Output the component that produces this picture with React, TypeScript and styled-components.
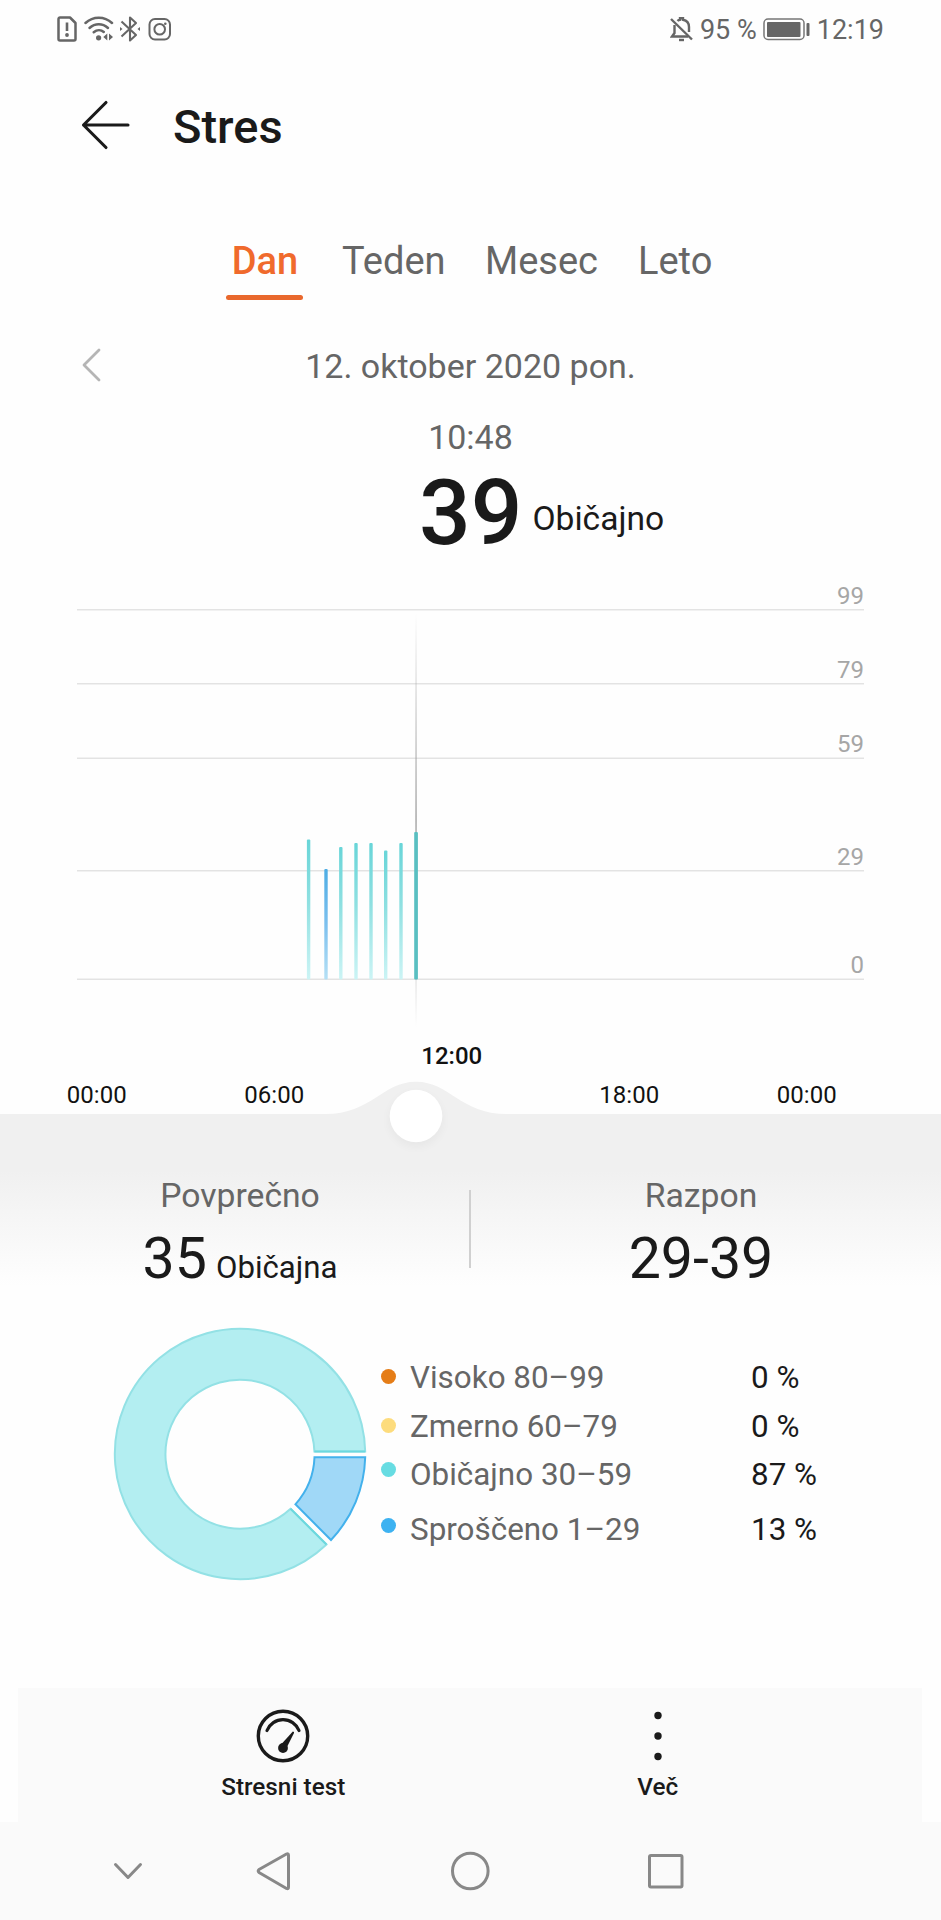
import React from "react";
import styled, { createGlobalStyle } from "styled-components";

const GlobalStyle = createGlobalStyle`
  * { box-sizing: border-box; }
  body { margin: 0; background: #fefefe; }
  svg { display: block; flex: none; }
`;

const ink = "#1a1a1a";
const muted = "#666666";

const Screen = styled.main`
  width: 941px;
  height: 1920px;
  display: flex;
  flex-direction: column;
  overflow: hidden;
  background: #fefefe;
  color: ${ink};
  font-family: Roboto, "Liberation Sans", sans-serif;
  white-space: nowrap;
`;

const StatusBar = styled.header`
  height: 60px;
  display: flex;
  align-items: center;
  justify-content: space-between;
  padding: 0 57px 0 57px;
  color: ${muted};
  font-size: 27px;
  line-height: 60px;
`;

const StatusGroup = styled.div<{ $gap: number }>`
  display: flex;
  align-items: center;
  gap: ${(p) => p.$gap}px;
`;

const StatusIcons = styled(StatusGroup)`
  padding-bottom: 2px;
`;

const TitleBar = styled.div`
  height: 135px;
  display: flex;
  align-items: center;
  padding-left: 80px;
  gap: 42px;
`;

const BackIcon = styled.svg`
  margin-top: -5px;
`;

const Title = styled.h1`
  margin: -2px 0 0;
  font-size: 47px;
  font-weight: 500;
  line-height: 60px;
`;

const Tabs = styled.nav`
  height: 140px;
  padding: 44px 0 0 226px;
  display: grid;
  grid-template-columns: 78px 105px 115px 80px;
  column-gap: 38px;
  align-items: start;
`;

const Tab = styled.div<{ $active?: boolean }>`
  height: 62px;
  font-size: 38px;
  line-height: 44px;
  text-align: ${(p) => (p.$active ? "center" : "left")};
  font-weight: ${(p) => (p.$active ? 500 : 400)};
  color: ${(p) => (p.$active ? "#f06a2c" : muted)};

  &::after {
    content: "";
    display: ${(p) => (p.$active ? "block" : "none")};
    height: 5px;
    margin: 12px 1px 0 0;
    border-radius: 3px;
    background: #e9682d;
  }
`;

const DateRow = styled.div`
  height: 61px;
  display: grid;
  grid-template-columns: 80px 1fr 80px;
  align-items: center;
  justify-items: center;
  color: ${muted};
  font-size: 34px;
`;

const PrevIcon = styled.svg`
  justify-self: end;
  margin: 0 -22px 1px 0;
`;

const ReadingTime = styled.div`
  padding-top: 21px;
  text-align: center;
  color: ${muted};
  font-size: 34px;
  line-height: 40px;
`;

const Reading = styled.div`
  height: 106px;
  padding: 6px 0 0 419px;
  display: flex;
  align-items: flex-start;
`;

const ReadingValue = styled.strong`
  font-size: 91px;
  font-weight: 500;
  line-height: 100px;
`;

const ReadingLabel = styled.span`
  margin: 36px 0 0 10px;
  font-size: 33.6px;
  line-height: 40px;
`;

const TimeAxis = styled.div`
  position: relative;
  height: 74px;
  padding: 2px 45px 4px 8px;
  display: grid;
  grid-template-columns: repeat(5, 177.5px);
  font-size: 24px;
  line-height: 29px;
  text-align: center;
  color: #111;
`;

const TimeLabel = styled.span<{ $active?: boolean }>`
  position: relative;
  z-index: 1;
  align-self: ${(p) => (p.$active ? "start" : "end")};
  font-weight: ${(p) => (p.$active ? 500 : 400)};
`;

const SliderHandle = styled.svg`
  position: absolute;
  left: 316px;
  top: 32px;
  z-index: 2;
`;

const Summary = styled.section`
  height: 176px;
  padding: 0 10px;
  display: flex;
  background: linear-gradient(#f0f0f0 0, #f0f0f0 56px, #fefefe 172px);
`;

const SummaryColumn = styled.div`
  flex: 1;
  padding-top: 62px;
  display: flex;
  flex-direction: column;
  align-items: center;
`;

const SummaryTitle = styled.div`
  font-size: 33.7px;
  line-height: 40px;
  color: ${muted};
`;

const SummaryValue = styled.div`
  margin-top: 8px;
  display: flex;
  align-items: baseline;
  gap: 9px;
  font-size: 57.3px;
  line-height: 70px;
`;

const SummaryNote = styled.span`
  font-size: 31.2px;
`;

const SummaryDivider = styled.div`
  width: 2px;
  height: 78px;
  margin-top: 76px;
  margin-left: -1px;
  background: #d0d0d0;
`;

const Breakdown = styled.section`
  height: 398px;
  padding: 34px 0 0 110px;
  display: flex;
  align-items: flex-start;
`;

const Legend = styled.div`
  margin: 29px 0 0 11px;
  font-size: 31.4px;
`;

const LegendRow = styled.div<{ $height: number }>`
  height: ${(p) => p.$height}px;
  display: grid;
  grid-template-columns: 29px 341px auto;
  align-items: center;
`;

const Dot = styled.i<{ $color: string; $lift: number }>`
  width: 15px;
  height: 15px;
  margin-bottom: ${(p) => p.$lift * 2}px;
  border-radius: 50%;
  background: ${(p) => p.$color};
`;

const LegendName = styled.span`
  color: ${muted};
`;

const ActionBar = styled.footer`
  height: 134px;
  margin: 0 19px 0 18px;
  padding: 0 77px 0 78px;
  display: grid;
  grid-template-columns: 1fr 1fr;
  background: #fafafa;
`;

const Action = styled.div`
  padding-top: 20px;
  display: flex;
  flex-direction: column;
  align-items: center;
  gap: 8px;
  font-size: 24.3px;
  font-weight: 500;
  line-height: 30px;
`;

const SystemNav = styled.div`
  height: 98px;
  background: #fafafa;
`;

const gridLines = [
  { y: 47, label: "99" },
  { y: 121, label: "79" },
  { y: 195.5, label: "59" },
  { y: 308, label: "29" },
  { y: 416.5, label: "0" },
];

const bars = [
  { x: 308.6, top: 276.5, low: false },
  { x: 326, top: 306, low: true },
  { x: 340.8, top: 284, low: false },
  { x: 356, top: 280, low: false },
  { x: 371, top: 280, low: false },
  { x: 385.7, top: 287.5, low: false },
  { x: 401, top: 280, low: false },
];

const legend = [
  { name: "Visoko 80–99", value: "0 %", color: "#e57d17", height: 49, lift: 1.5 },
  { name: "Zmerno 60–79", value: "0 %", color: "#fddc7d", height: 49, lift: 1.5 },
  { name: "Običajno 30–59", value: "87 %", color: "#67dce2", height: 47, lift: 5 },
  { name: "Sproščeno 1–29", value: "13 %", color: "#3db2f1", height: 63, lift: 4.5 },
];

function StressChart() {
  return (
    <svg width="941" height="477" viewBox="0 0 941 477">
      <defs>
        <linearGradient id="normal" x1="0" y1="0" x2="0" y2="1">
          <stop offset="0" stopColor="#68d5d8" />
          <stop offset="0.45" stopColor="#8fe0e1" />
          <stop offset="1" stopColor="#ccf4f5" />
        </linearGradient>
        <linearGradient id="relaxed" x1="0" y1="0" x2="0" y2="1">
          <stop offset="0" stopColor="#4eade4" />
          <stop offset="0.5" stopColor="#7cc0ee" />
          <stop offset="1" stopColor="#b5e0f5" />
        </linearGradient>
        <linearGradient id="cursor" x1="0" y1="0" x2="0" y2="1">
          <stop offset="0" stopColor="#999" stopOpacity="0" />
          <stop offset="0.5" stopColor="#999" stopOpacity="0.75" />
          <stop offset="0.78" stopColor="#999" stopOpacity="0.4" />
          <stop offset="1" stopColor="#999" stopOpacity="0" />
        </linearGradient>
      </defs>
      {gridLines.map((g) => (
        <g key={g.label}>
          <rect x="77" y={g.y - 1} width="787" height="1.5" fill="#e3e3e3" />
          <text x="864" y={g.y - 6.5} textAnchor="end" fontSize="24" fill="#a6a6a6">
            {g.label}
          </text>
        </g>
      ))}
      <rect x="415.2" y="50" width="1.7" height="414" fill="url(#cursor)" />
      {bars.map((b) => (
        <rect
          key={b.x}
          x={b.x - 1.7}
          y={b.top}
          width="3.4"
          height={416.5 - b.top}
          rx="1"
          fill={b.low ? "url(#relaxed)" : "url(#normal)"}
        />
      ))}
      <rect x="414.2" y="269" width="3.7" height="147.5" rx="1" fill="#59bfc1" />
    </svg>
  );
}

function StressDonut() {
  return (
    <svg width="260" height="260" viewBox="-130 -130 260 260">
      <path
        d="M125.2 -2.6 A125.2 125.2 0 1 0 86.5 90.5 L50.6 54.8 A74.5 74.5 0 1 1 74.4 -2.6 Z"
        fill="#b3eef1"
        stroke="#93e1e5"
        strokeWidth="2"
      />
      <path d="M74.4 -2.6 H125.2 M50.6 54.8 L86.5 90.5" stroke="#6cd8de" strokeWidth="2" />
      <path
        d="M74.5 3.3 H125.2 A125.2 125.2 0 0 1 91 86 L55.4 50.3 A74.5 74.5 0 0 0 74.5 3.3 Z"
        fill="#a0d8f7"
        stroke="#43b1ec"
        strokeWidth="2"
      />
    </svg>
  );
}

export default function App() {
  return (
    <>
      <GlobalStyle />
      <Screen>
        <StatusBar>
          <StatusIcons $gap={6.5}>
            <svg width="20" height="26" viewBox="0 0 20 26" fill="none" stroke="#666" strokeWidth="2.5" strokeLinejoin="round">
              <path d="M3 1.5h10l5.5 5.5v16a1.5 1.5 0 0 1-1.5 1.5H3A1.5 1.5 0 0 1 1.5 23V3A1.5 1.5 0 0 1 3 1.5Z" />
              <path d="M10 6.5v8.5" strokeWidth="2.6" />
              <circle cx="10" cy="19" r="1.9" fill="#666" stroke="none" />
            </svg>
            <svg width="30" height="26" viewBox="0 0 30 26" fill="none" stroke="#666" strokeWidth="2.5" strokeLinecap="round">
              <path d="M1.5 7C9 0 20.5 0 28 7" />
              <path d="M5.5 12C11 7 18.5 7 24 12" />
              <path d="M9.7 16.2C13 13.5 17 13.5 19.8 16" />
              <circle cx="14.6" cy="21.8" r="2.6" fill="#666" stroke="none" />
              <path d="M23.3 17.5v7l-4-3.5ZM25 17.5v7l4-3.5Z" fill="#666" stroke="none" />
            </svg>
            <svg width="20" height="26" viewBox="0 0 20 26" fill="none" stroke="#666" strokeWidth="2.1" strokeLinejoin="round">
              <path d="M1.5 5.5L16 19l-6 5.5V1.5L16 7 1.5 20.5" />
              <path d="M0 11l2.500 2L0 15ZM20 11l-2.500 2 2.500 2Z" fill="#666" stroke="none" />
            </svg>
            <svg width="24" height="26" viewBox="-1 0 24 26" fill="none" stroke="#666" strokeWidth="2">
              <rect x="1.5" y="3" width="20.5" height="20.5" rx="5.5" />
              <circle cx="11.7" cy="13.3" r="5.3" />
              <circle cx="17.3" cy="7.7" r="1.3" fill="#666" stroke="none" />
            </svg>
          </StatusIcons>
          <StatusGroup $gap={6.5}>
            <svg width="23" height="26" viewBox="0 1 23 26" fill="none" stroke="#666" strokeWidth="2.4">
              <path d="M1 3L22 23.5" />
              <path d="M7.5 5C8.5 4 9.5 3.8 10 3.7V2.2h3v1.5C17 4.5 19 7.5 19 11v5" />
              <path d="M4.5 9v8L2 20.5h16" />
              <path d="M9 24h5" />
            </svg>
            <span>95 %</span>
            <svg width="47" height="24" viewBox="0 1 47 24" fill="none">
              <rect x="1" y="2" width="40" height="20.5" rx="4" stroke="#777" strokeWidth="1.5" />
              <rect x="4" y="5" width="33.5" height="15" rx="1" fill="#666" />
              <rect x="43.5" y="6" width="3" height="13" rx="1" fill="#666" />
            </svg>
            <span>12:19</span>
          </StatusGroup>
        </StatusBar>

        <TitleBar>
          <BackIcon width="51" height="50" viewBox="0 0 51 50" fill="none" stroke={ink} strokeWidth="3.1" strokeLinecap="round" strokeLinejoin="round">
            <path d="M48 25H3.5M26 2.5L3.5 25 26 47.5" />
          </BackIcon>
          <Title>Stres</Title>
        </TitleBar>

        <Tabs>
          <Tab $active>Dan</Tab>
          <Tab>Teden</Tab>
          <Tab>Mesec</Tab>
          <Tab>Leto</Tab>
        </Tabs>

        <DateRow>
          <PrevIcon width="20" height="34" viewBox="0 0 20 34" fill="none" stroke="#b5b5b5" strokeWidth="2.8" strokeLinecap="round" strokeLinejoin="round">
            <path d="M17 2L2 17l15 15" />
          </PrevIcon>
          <span>12. oktober 2020 pon.</span>
        </DateRow>

        <ReadingTime>10:48</ReadingTime>
        <Reading>
          <ReadingValue>39</ReadingValue>
          <ReadingLabel>Običajno</ReadingLabel>
        </Reading>

        <StressChart />

        <TimeAxis>
          <TimeLabel>00:00</TimeLabel>
          <TimeLabel>06:00</TimeLabel>
          <TimeLabel $active>12:00</TimeLabel>
          <TimeLabel>18:00</TimeLabel>
          <TimeLabel>00:00</TimeLabel>
          <SliderHandle width="200" height="90" viewBox="0 0 200 90">
            <defs>
              <filter id="soft" x="-40%" y="-40%" width="180%" height="180%">
                <feGaussianBlur stdDeviation="5" />
              </filter>
            </defs>
            <path d="M9 42C56 42 66 9.7 100 9.7S144 42 191 42Z" fill="#f0f0f0" />
            <circle cx="100" cy="48" r="27" fill="#000" opacity="0.035" filter="url(#soft)" />
            <circle cx="100" cy="44" r="26.3" fill="#fff" />
          </SliderHandle>
        </TimeAxis>

        <Summary>
          <SummaryColumn>
            <SummaryTitle>Povprečno</SummaryTitle>
            <SummaryValue>
              35<SummaryNote>Običajna</SummaryNote>
            </SummaryValue>
          </SummaryColumn>
          <SummaryDivider />
          <SummaryColumn>
            <SummaryTitle>Razpon</SummaryTitle>
            <SummaryValue>29-39</SummaryValue>
          </SummaryColumn>
        </Summary>

        <Breakdown>
          <StressDonut />
          <Legend>
            {legend.map((l) => (
              <LegendRow key={l.name} $height={l.height}>
                <Dot $color={l.color} $lift={l.lift} />
                <LegendName>{l.name}</LegendName>
                <span>{l.value}</span>
              </LegendRow>
            ))}
          </Legend>
        </Breakdown>

        <ActionBar>
          <Action>
            <svg width="56" height="56" viewBox="-28 -28 56 56" fill="none" stroke={ink} strokeLinecap="round">
              <circle r="24.7" strokeWidth="3.4" />
              <path d="M-16 -5.5A17.2 17.2 0 0 1 16 -5.5" strokeWidth="3.2" />
              <path d="M9.8 -4.5Q11.6 -4.5 11 -3L4.5 10 -1.5 8Z" fill={ink} stroke="none" />
              <circle cy="12" r="4.9" fill={ink} stroke="none" />
            </svg>
            <span>Stresni test</span>
          </Action>
          <Action>
            <svg width="10" height="56" viewBox="-5 -28 10 56" fill={ink}>
              <circle cy="-20.5" r="3.7" />
              <circle cy="0" r="3.7" />
              <circle cy="20.5" r="3.7" />
            </svg>
            <span>Več</span>
          </Action>
        </ActionBar>

        <SystemNav>
          <svg width="941" height="98" viewBox="0 0 941 98" fill="none" stroke="#888" strokeWidth="3" strokeLinecap="round" strokeLinejoin="round">
            <path d="M115.5 42.5L128 55.5 140.5 42.5" />
            <path d="M286.5 32Q288.5 31 288.5 33.5V65Q288.5 67.5 286.5 66.5L259 50.5Q257.5 49 259 47.5Z" />
            <circle cx="470.3" cy="49" r="17.8" />
            <rect x="649.5" y="33.5" width="32.5" height="31.5" rx="1.5" />
          </svg>
        </SystemNav>
      </Screen>
    </>
  );
}
